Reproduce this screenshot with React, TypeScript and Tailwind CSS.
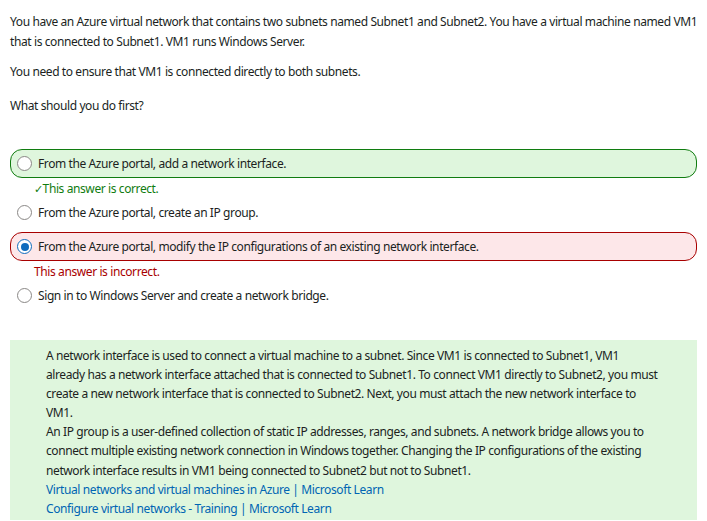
import React from 'react';

interface Option {
  text: string;
  state?: 'correct' | 'incorrect';
  selected?: boolean;
}

const options: Option[] = [
  { text: 'From the Azure portal, add a network interface.', state: 'correct' },
  { text: 'From the Azure portal, create an IP group.' },
  { text: 'From the Azure portal, modify the IP configurations of an existing network interface.', state: 'incorrect', selected: true },
  { text: 'Sign in to Windows Server and create a network bridge.' },
];

function Radio({ selected }: { selected?: boolean }) {
  return (
    <span
      className={`flex h-[15px] w-[15px] shrink-0 items-center justify-center rounded-full border bg-white ${
        selected ? 'border-[#0f6cbd]' : 'border-[#8a8886]'
      }`}
    >
      {selected && <span className="h-[8px] w-[8px] rounded-full bg-[#0f6cbd]" />}
    </span>
  );
}

function OptionRow({ option }: { option: Option }) {
  const box =
    option.state === 'correct'
      ? 'border-[#107c10] bg-[#dff6dd]'
      : option.state === 'incorrect'
        ? 'border-[#a80000] bg-[#fde7e9]'
        : 'border-transparent';
  return (
    <div className={option.state ? '' : 'mb-[5px]'}>
      <div className={`flex h-[29px] items-center gap-[6px] rounded-[12px] border pl-[6px] ${box}`}>
        <Radio selected={option.selected} />
        <span>{option.text}</span>
      </div>
      {option.state === 'correct' && (
        <div className="flex h-[20px] items-center pl-[24px] text-[#107c10]">
          <span className="text-[11px] leading-none">✓</span>
          <span>This answer is correct.</span>
        </div>
      )}
      {option.state === 'incorrect' && (
        <div className="flex h-[20px] items-center pl-[24px] text-[#a80000]">This answer is incorrect.</div>
      )}
    </div>
  );
}

export default function App() {
  return (
    <div
      className="min-h-[521px] whitespace-nowrap bg-white px-[10px] pt-[12px] text-[12px] leading-[19px] tracking-[-0.4px] text-[#201f1e]"
      style={{ fontFamily: '"Segoe UI", "Noto Sans", sans-serif' }}
    >
      <p className="leading-[20px]">
        You have an Azure virtual network that contains two subnets named Subnet1 and Subnet2. You have a virtual machine named VM1
        <br />
        that is connected to Subnet1. VM1 runs Windows Server.
      </p>
      <p className="mt-[10px]">You need to ensure that VM1 is connected directly to both subnets.</p>
      <p className="mt-[15px]">What should you do first?</p>

      <div className="mt-[34px]">
        {options.map((o, i) => (
          <OptionRow key={i} option={o} />
        ))}
      </div>

      <div className="mt-[30px] h-[180px] bg-[#dff6dd] pl-[36px] pr-[10px] pt-[6px] leading-[19.1px]">
        <p>
          A network interface is used to connect a virtual machine to a subnet. Since VM1 is connected to Subnet1, VM1
          <br />
          already has a network interface attached that is connected to Subnet1. To connect VM1 directly to Subnet2, you must
          <br />
          create a new network interface that is connected to Subnet2. Next, you must attach the new network interface to
          <br />
          VM1.
        </p>
        <p>
          An IP group is a user-defined collection of static IP addresses, ranges, and subnets. A network bridge allows you to
          <br />
          connect multiple existing network connection in Windows together. Changing the IP configurations of the existing
          <br />
          network interface results in VM1 being connected to Subnet2 but not to Subnet1.
        </p>
        <a className="block text-[#0065b3]" href="#">
          Virtual networks and virtual machines in Azure | Microsoft Learn
        </a>
        <a className="block text-[#0065b3]" href="#">
          Configure virtual networks - Training | Microsoft Learn
        </a>
      </div>
    </div>
  );
}
